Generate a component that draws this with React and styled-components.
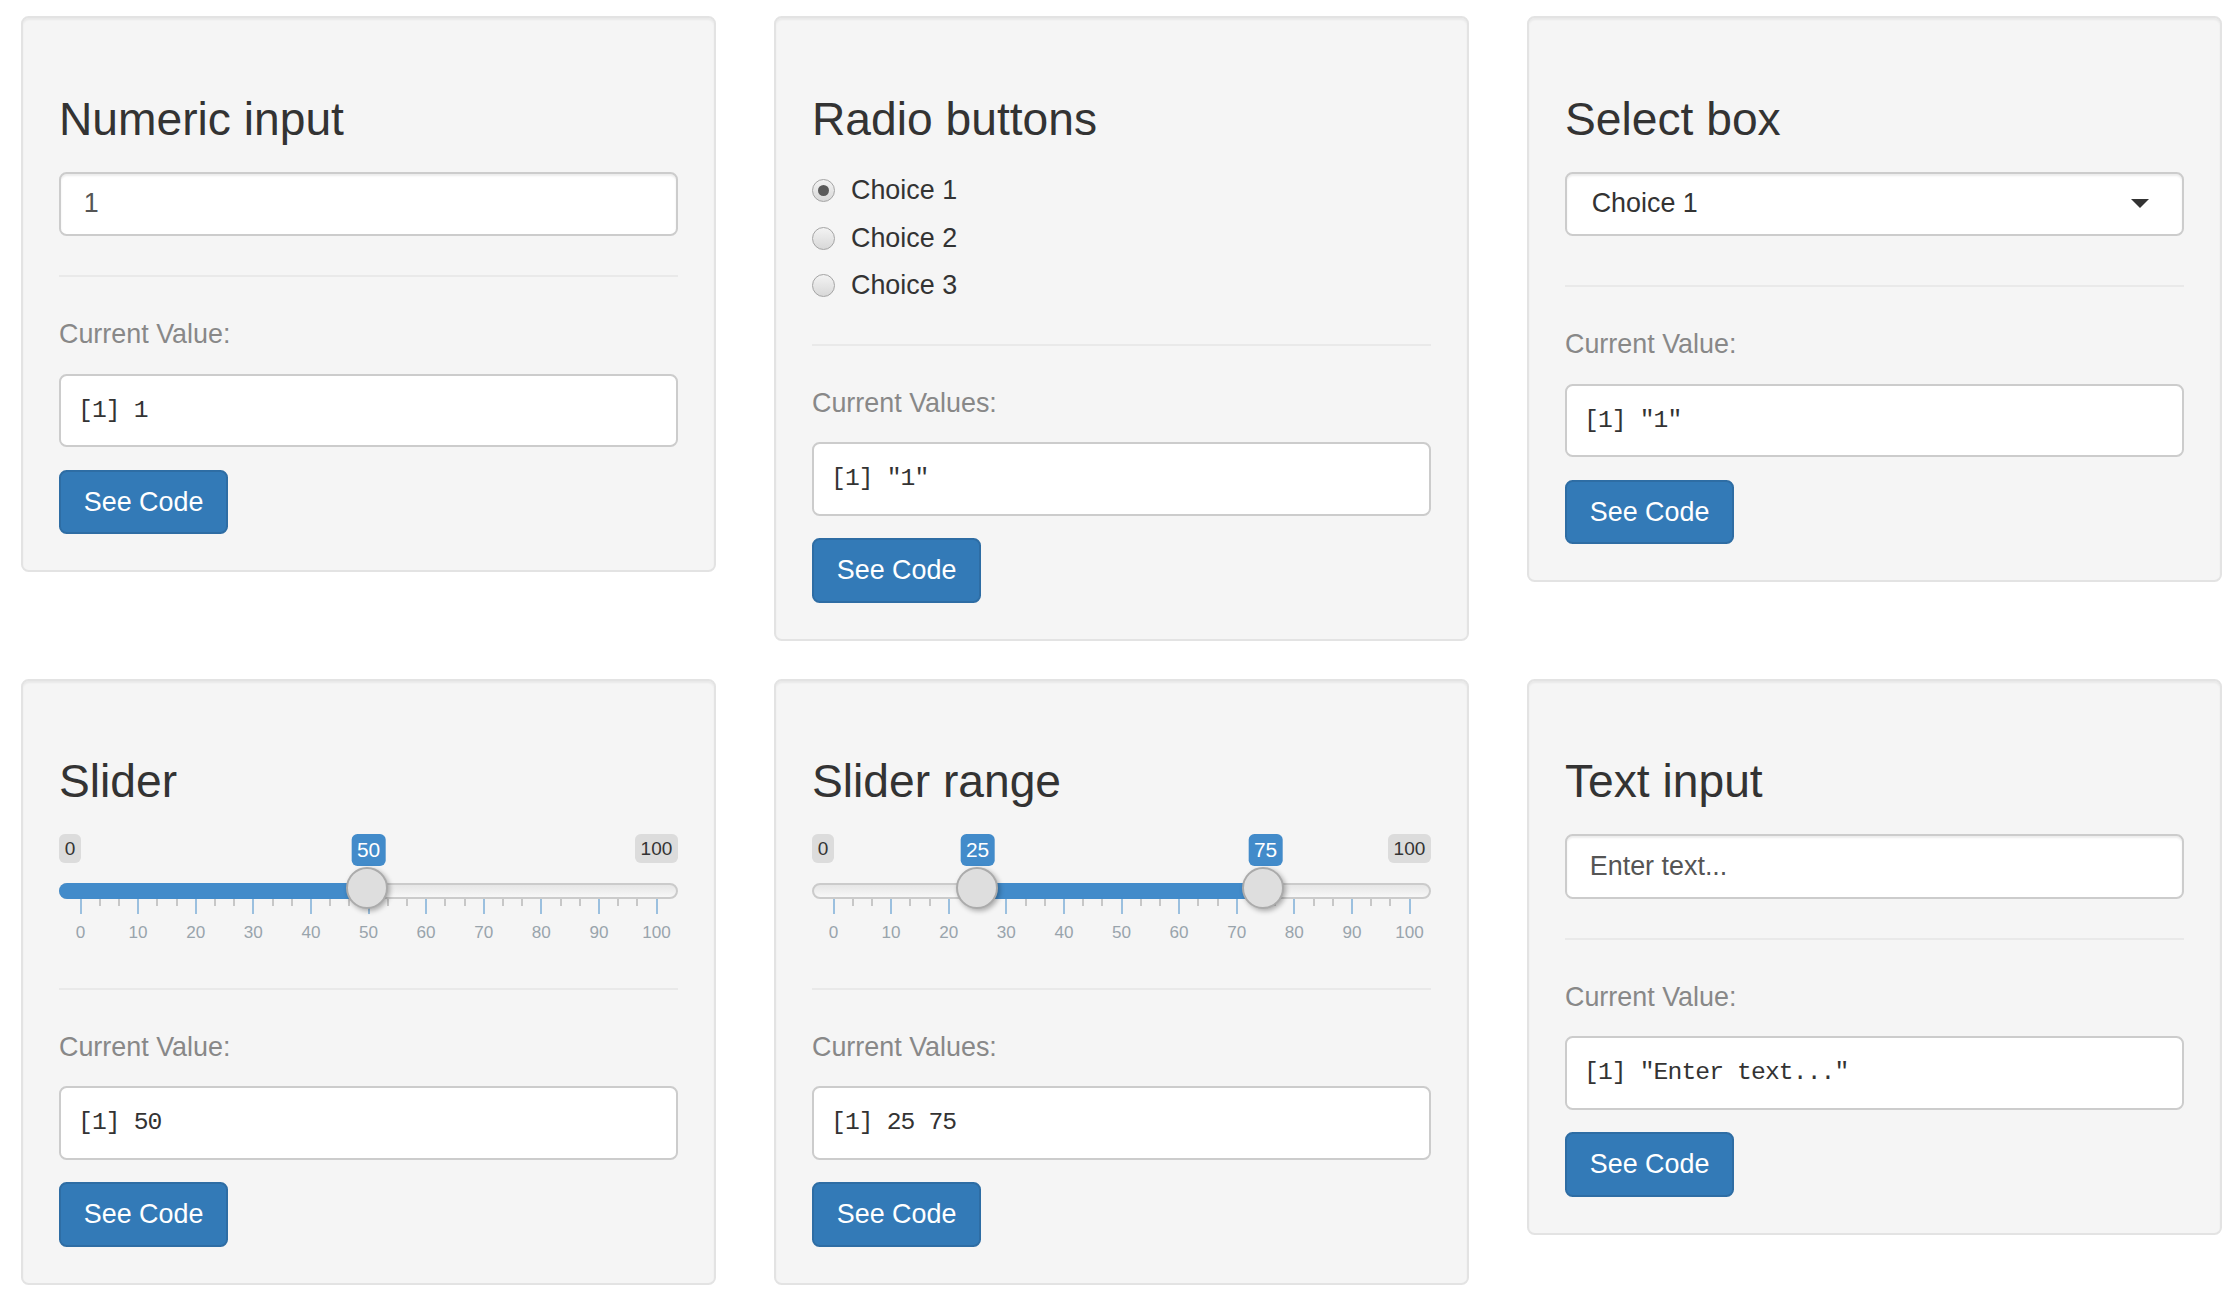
import React from "react";
import styled, { createGlobalStyle } from "styled-components";

const GlobalStyle = createGlobalStyle`
  html, body {
    margin: 0;
    background: #fff;
  }
  body {
    font-family: "Liberation Sans", Arial, Helvetica, sans-serif;
    color: #333;
  }
  * { box-sizing: border-box; }
`;

const Page = styled.div`
  display: grid;
  grid-template-columns: repeat(3, 1fr);
  column-gap: 58px;
  row-gap: 38px;
  align-items: start;
  padding: 16px 10px 0 21px;
`;

const Well = styled.section`
  background: #f5f5f5;
  border: 2px solid #e3e3e3;
  border-radius: 7.6px;
  padding: 36px;
  box-shadow: inset 0 2px 2px rgba(0, 0, 0, 0.05);
`;

const Title = styled.h3`
  margin: 39.5px 0 27.9px;
  font-size: 46.2px;
  line-height: 50.2px;
  font-weight: 400;
  color: #333;
`;

const Field = styled.input`
  display: block;
  width: 100%;
  height: 64.6px;
  padding: 0 22.8px;
  border: 2px solid #ccc;
  border-radius: 7.6px;
  background: #fff;
  box-shadow: inset 0 2px 2px rgba(0, 0, 0, 0.075);
  font-family: "Liberation Sans", Arial, sans-serif;
  font-size: 26.9px;
  color: #555;
  outline: none;
`;

const SelectBox = styled.div`
  display: flex;
  align-items: center;
  justify-content: space-between;
  height: 64.6px;
  padding: 0 33px 0 24.7px;
  border: 2px solid #ccc;
  border-radius: 7.6px;
  background: #fff;
  box-shadow: inset 0 2px 2px rgba(0, 0, 0, 0.075);
  font-size: 26.9px;
  color: #333;
`;

const Caret = styled.span`
  width: 0;
  height: 0;
  border-style: solid;
  border-width: 9.5px 9.5px 0 9.5px;
  border-color: #333 transparent transparent transparent;
`;

const RadioList = styled.div`
  display: flex;
  flex-direction: column;
  gap: 9.5px;
`;

const RadioRow = styled.label`
  display: flex;
  align-items: center;
  height: 38px;
  font-size: 26.9px;
  color: #333;
`;

const RadioDot = styled.span`
  position: relative;
  width: 23px;
  height: 23px;
  margin-right: 16px;
  border-radius: 50%;
  border: 1.5px solid #a4a4a4;
  background: linear-gradient(to bottom, #f3f3f3, #d8d8d8);
  &::after {
    content: "";
    display: ${(p) => (p.$checked ? "block" : "none")};
    position: absolute;
    left: 50%;
    top: 50%;
    width: 11px;
    height: 11px;
    margin: -5.5px 0 0 -5.5px;
    border-radius: 50%;
    background: #5a5a5a;
  }
`;

const Divider = styled.hr`
  height: 0;
  margin: ${(p) => p.$gap}px 0 38px;
  border: 0;
  border-top: 2px solid #e9e9e9;
`;

const ValueLabel = styled.p`
  margin: 0;
  font-size: 26.9px;
  line-height: 38px;
  color: #888;
`;

const Output = styled.pre`
  margin: 20.5px 0 22.4px;
  padding: 17.1px 17px;
  border: 2px solid #ccc;
  border-radius: 7.6px;
  background: #fff;
  font-family: "Liberation Mono", "Courier New", monospace;
  font-size: 24.7px;
  letter-spacing: -0.9px;
  line-height: 35.3px;
  color: #333;
  white-space: pre;
`;

const ButtonRow = styled.div`
  display: flex;
`;

const Button = styled.a`
  display: inline-block;
  height: 64.6px;
  padding: 0 22.8px;
  border: 2px solid #2e6da4;
  border-radius: 7.6px;
  background: #337ab7;
  color: #fff;
  font-size: 26.9px;
  line-height: 60.6px;
  text-decoration: none;
`;

/* ---- slider (ion.rangeSlider look) ---- */

const SliderBox = styled.div`
  display: flex;
  flex-direction: column;
  height: 114px;
`;

const LabelRow = styled.div`
  position: relative;
  display: flex;
  justify-content: space-between;
  align-items: flex-start;
  height: 48.5px;
`;

const EdgeLabel = styled.span`
  padding: 1.9px 5.7px;
  border-radius: 5.7px;
  background: rgba(0, 0, 0, 0.1);
  font-size: 19px;
  line-height: 25.3px;
  color: #333;
`;

const ValueTag = styled.span`
  position: absolute;
  top: 0;
  transform: translateX(-50%);
  padding: 1.9px 5.7px;
  border-radius: 5.7px;
  background: #428bca;
  font-size: 20.9px;
  line-height: 27.9px;
  color: #fff;
`;

const Rail = styled.div`
  position: relative;
  height: 16px;
  border: 2px solid #cbcbcb;
  border-radius: 8px;
  background: linear-gradient(to bottom, #dedede -50%, #fff 150%);
`;

const Fill = styled.div`
  position: absolute;
  top: -2px;
  bottom: -2px;
  background: #428bca;
  border-radius: ${(p) => (p.$single ? "8px 0 0 8px" : "0")};
`;

const Handle = styled.span`
  position: absolute;
  top: -17.4px;
  width: 42px;
  height: 42px;
  transform: translateX(-50%);
  border: 2px solid #ababab;
  border-radius: 50%;
  background: #dedede;
  box-shadow: 2px 2px 5px rgba(0, 0, 0, 0.3);
  z-index: 3;
`;

const Scale = styled.div`
  position: relative;
  flex: 1;
`;

const Tick = styled.span`
  position: absolute;
  top: 0;
  width: 2px;
  margin-left: -1px;
  height: ${(p) => (p.$major ? "15.3px" : "7.6px")};
  background: ${(p) => (p.$major ? "#9bc0df" : "#c7c7c7")};
`;

const TickText = styled.span`
  position: absolute;
  top: 24.2px;
  transform: translateX(-50%);
  font-size: 17.1px;
  line-height: 20px;
  color: #99a4ac;
`;

const PAD = 21.5;
// position of a value along the slider, measured from the outer left edge
const at = (v, shift = 0) =>
  `calc(${PAD + shift}px + (100% - ${PAD * 2}px) * ${v / 100})`;

function RangeSlider({ values }) {
  const single = values.length === 1;
  const from = single ? 0 : values[0];
  const to = values[values.length - 1];
  const marks = [];
  for (let i = 0; i <= 100; i += 10) {
    marks.push(<Tick key={`M${i}`} $major style={{ left: at(i) }} />);
    marks.push(
      <TickText key={`T${i}`} style={{ left: at(i) }}>
        {i}
      </TickText>
    );
    if (i < 100) {
      marks.push(<Tick key={`a${i}`} style={{ left: at(i + 10 / 3) }} />);
      marks.push(<Tick key={`b${i}`} style={{ left: at(i + 20 / 3) }} />);
    }
  }
  const fillStyle = single
    ? { left: -2, width: at(to, 2) }
    : {
        left: at(from, -2),
        width: `calc((100% + 4px - ${PAD * 2}px) * ${(to - from) / 100})`,
      };
  return (
    <SliderBox>
      <LabelRow>
        <EdgeLabel>0</EdgeLabel>
        <EdgeLabel>100</EdgeLabel>
        {values.map((v) => (
          <ValueTag key={v} style={{ left: at(v) }}>
            {v}
          </ValueTag>
        ))}
      </LabelRow>
      <Rail>
        <Fill $single={single} style={fillStyle} />
        {values.map((v) => (
          <Handle key={v} style={{ left: at(v, -2) }} />
        ))}
      </Rail>
      <Scale>{marks}</Scale>
    </SliderBox>
  );
}

const choices = ["Choice 1", "Choice 2", "Choice 3"];

const panels = [
  {
    title: "Numeric input",
    control: <Field type="text" readOnly value="1" />,
    label: "Current Value:",
    output: "[1] 1",
  },
  {
    title: "Radio buttons",
    control: (
      <RadioList>
        {choices.map((c, i) => (
          <RadioRow key={c}>
            <RadioDot $checked={i === 0} />
            {c}
          </RadioRow>
        ))}
      </RadioList>
    ),
    label: "Current Values:",
    output: '[1] "1"',
  },
  {
    title: "Select box",
    control: (
      <SelectBox>
        Choice 1
        <Caret />
      </SelectBox>
    ),
    gap: 49,
    label: "Current Value:",
    output: '[1] "1"',
  },
  {
    title: "Slider",
    control: <RangeSlider values={[50]} />,
    gap: 39.5,
    label: "Current Value:",
    output: "[1] 50",
  },
  {
    title: "Slider range",
    control: <RangeSlider values={[25, 75]} />,
    gap: 39.5,
    label: "Current Values:",
    output: "[1] 25 75",
  },
  {
    title: "Text input",
    control: <Field type="text" readOnly value="Enter text..." />,
    label: "Current Value:",
    output: '[1] "Enter text..."',
  },
];

export default function App() {
  return (
    <>
      <GlobalStyle />
      <Page>
        {panels.map((p) => (
          <Well key={p.title}>
            <Title>{p.title}</Title>
            {p.control}
            <Divider $gap={p.gap || 39} />
            <ValueLabel>{p.label}</ValueLabel>
            <Output>{p.output}</Output>
            <ButtonRow>
              <Button href="#">See Code</Button>
            </ButtonRow>
          </Well>
        ))}
      </Page>
    </>
  );
}
